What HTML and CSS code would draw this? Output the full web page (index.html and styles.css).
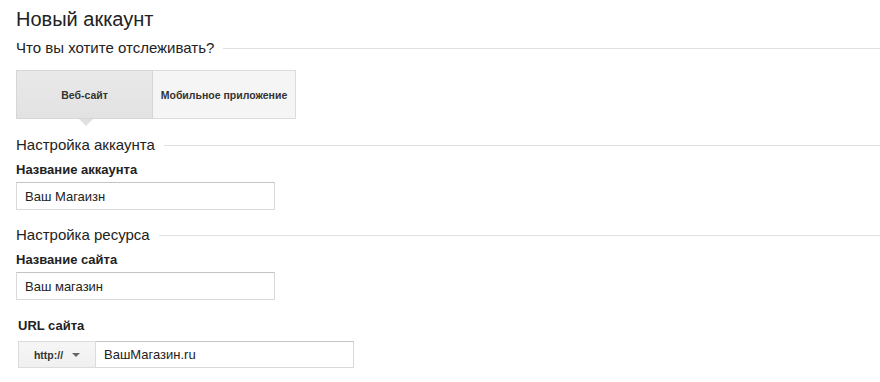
FILE: index.html
```html
<!DOCTYPE html>
<html lang="ru">
<head>
    <meta charset="UTF-8">
    <title>Новый аккаунт</title>
    <link rel="stylesheet" href="styles.css">
</head>
<body>
<div class="page">
    <h1 class="title">Новый аккаунт</h1>
    <h2 class="section first">Что вы хотите отслеживать?</h2>

    <div class="toggle">
        <div class="toggle-btn selected">Веб-сайт</div>
        <div class="toggle-btn">Мобильное приложение</div>
    </div>

    <h2 class="section gap-toggle">Настройка аккаунта</h2>
    <div class="label">Название аккаунта</div>
    <div class="field">Ваш Магаизн</div>

    <h2 class="section gap-field">Настройка ресурса</h2>
    <div class="label">Название сайта</div>
    <div class="field">Ваш магазин</div>

    <div class="label url-label">URL сайта</div>
    <div class="url-group">
        <div class="proto">http:// <span class="caret"></span></div>
        <div class="url-input">ВашМагазин.ru</div>
    </div>
</div>
</body>
</html>
```

FILE: styles.css
```css
*{
    margin: 0;
    box-sizing: border-box;
}

body{
    font-family: "Liberation Sans", Arial, sans-serif;
    color: #222;
    background: #fff;
}

.page{
    padding-left: 16px;
}

.title{
    font-size: 20px;
    font-weight: normal;
    line-height: 24px;
    margin-top: 7px;
    color: #222;
}

.section{
    display: flex;
    align-items: center;
    font-size: 15px;
    font-weight: normal;
    line-height: 20px;
    color: #222;
}
.section::after{
    content: "";
    flex: 1;
    height: 1px;
    background: #e0e0e0;
    margin-left: 9px;
}
.section.first{
    margin-top: 7px;
}
.section.gap-toggle{
    margin-top: 16px;
}
.section.gap-field{
    margin-top: 15px;
}

.toggle{
    display: flex;
    margin-top: 12px;
    height: 49px;
}
.toggle-btn{
    position: relative;
    display: flex;
    align-items: center;
    justify-content: center;
    height: 100%;
    font-size: 10.5px;
    font-weight: bold;
    color: #333;
    background: #f5f5f5;
    border: 1px solid #dcdcdc;
}
.toggle-btn + .toggle-btn{
    border-left: none;
}
.toggle-btn.selected{
    width: 137px;
    background: linear-gradient(#e9e9e9, #e2e2e2);
    border-color: #d6d6d6;
}
.toggle-btn.selected::after{
    content: "";
    position: absolute;
    left: 62px;
    bottom: -8px;
    border-left: 7px solid transparent;
    border-right: 7px solid transparent;
    border-top: 7px solid #e0e0e0;
}
.toggle-btn:not(.selected){
    width: 143px;
}

.label{
    font-size: 13px;
    font-weight: bold;
    line-height: 16px;
    margin-top: 7px;
    color: #222;
}
.url-label{
    margin-top: 18px;
    margin-left: 2px;
}

.field{
    width: 259px;
    height: 28px;
    margin-top: 4px;
    padding-left: 8px;
    display: flex;
    align-items: center;
    font-size: 13px;
    color: #222;
    border: 1px solid #d9d9d9;
    border-top-color: #c4c4c4;
}

.url-group{
    display: flex;
    width: 336px;
    height: 27px;
    margin-top: 7px;
    margin-left: 2px;
}
.proto{
    width: 78px;
    display: flex;
    align-items: center;
    justify-content: center;
    gap: 9px;
    font-size: 10.5px;
    font-weight: bold;
    color: #333;
    background: linear-gradient(#f6f6f6, #f0f0f0);
    border: 1px solid #dcdcdc;
}
.caret{
    display: inline-block;
    border-left: 4px solid transparent;
    border-right: 4px solid transparent;
    border-top: 4px solid #666;
}
.url-input{
    flex: 1;
    display: flex;
    align-items: center;
    padding-left: 8px;
    font-size: 13px;
    color: #222;
    border: 1px solid #d9d9d9;
    border-top-color: #c4c4c4;
    border-left: none;
}
```
